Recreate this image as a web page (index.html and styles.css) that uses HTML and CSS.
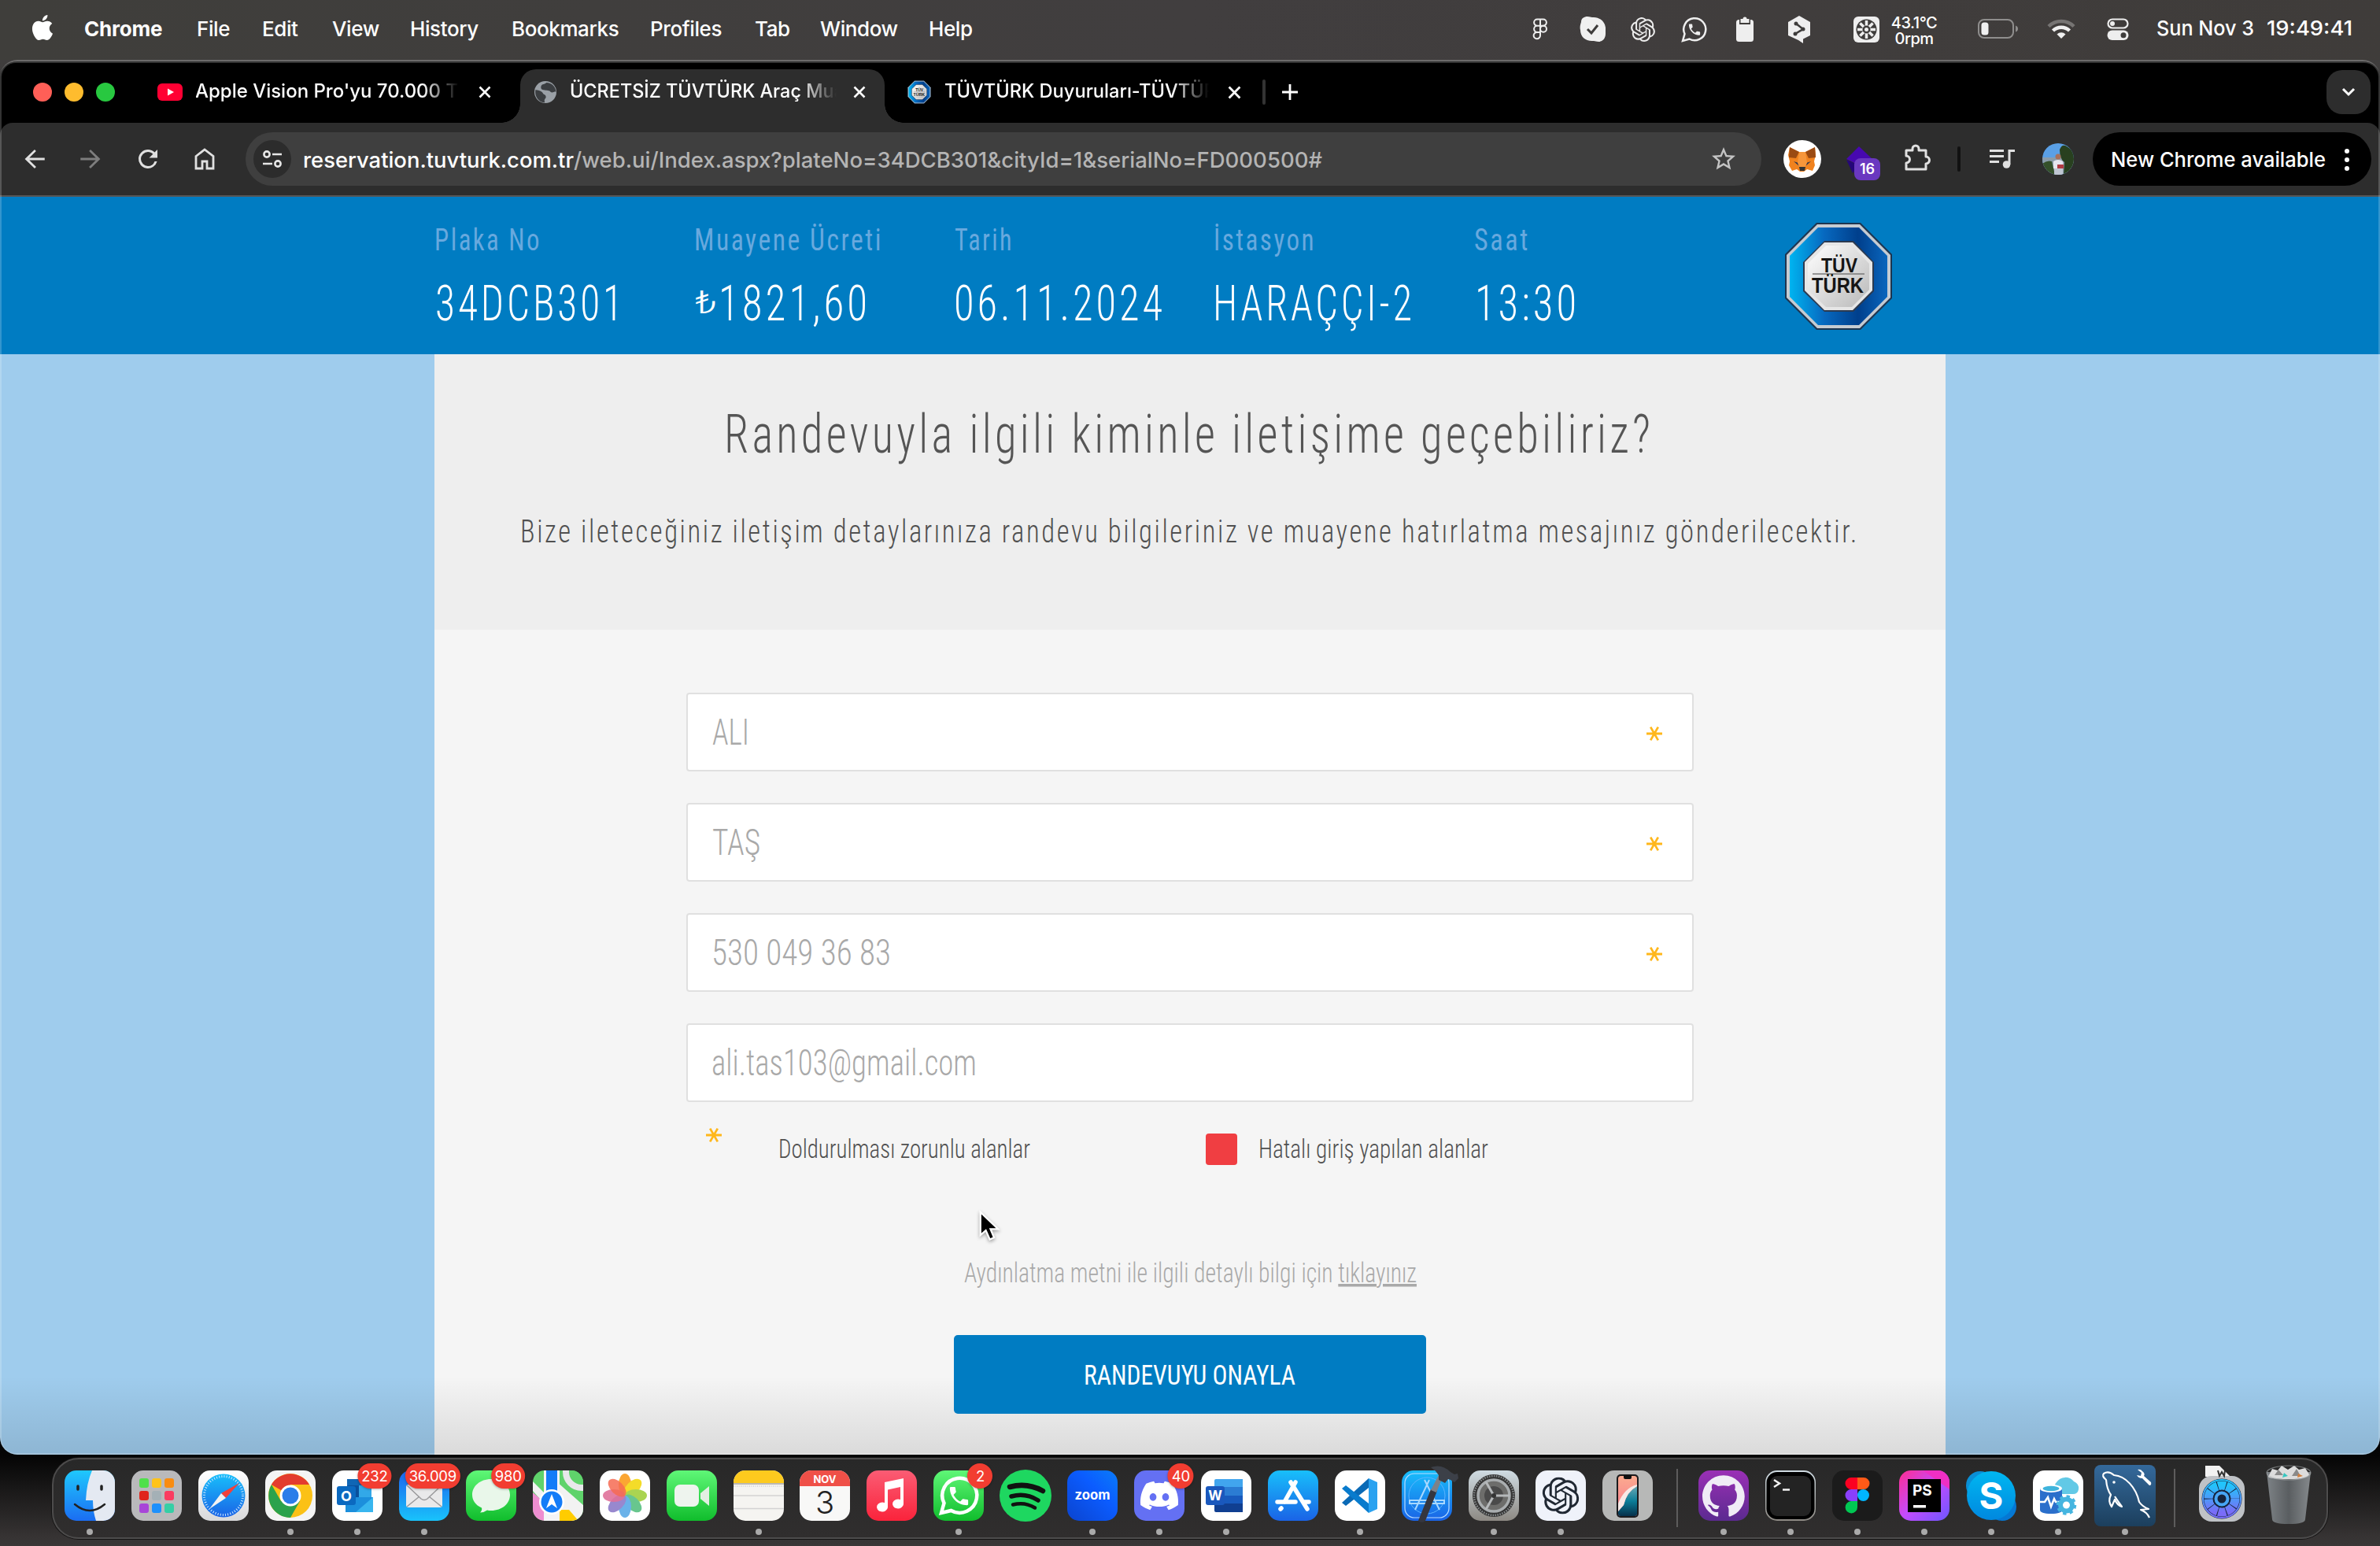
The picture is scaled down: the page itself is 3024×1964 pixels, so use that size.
FILE: index.html
```html
<!DOCTYPE html>
<html lang="tr">
<head>
<meta charset="utf-8">
<title>ÜCRETSİZ TÜVTÜRK Araç Muayene</title>
<link rel="stylesheet" href="styles.css">
</head>
<body>
<svg class="defs" width="0" height="0">
  <defs>
    <linearGradient id="gFinder" x2="0" y2="1"><stop stop-color="#1fc8fd"/><stop offset="1" stop-color="#1b6df2"/></linearGradient>
    <linearGradient id="gWhite" x2="0" y2="1"><stop stop-color="#fff"/><stop offset="1" stop-color="#d8d8da"/></linearGradient>
    <linearGradient id="gGreen" x2="0" y2="1"><stop stop-color="#5ff777"/><stop offset="1" stop-color="#10bd2c"/></linearGradient>
    <linearGradient id="gMail" x2="0" y2="1"><stop stop-color="#1a63ee"/><stop offset="1" stop-color="#19c3fb"/></linearGradient>
    <linearGradient id="gStore" x2="0" y2="1"><stop stop-color="#18bffb"/><stop offset="1" stop-color="#1a63e6"/></linearGradient>
    <linearGradient id="gMusic" x2="0" y2="1"><stop stop-color="#fb5c74"/><stop offset="1" stop-color="#fa233b"/></linearGradient>
    <linearGradient id="gGrey" x2="0" y2="1"><stop stop-color="#cfdbe2"/><stop offset="1" stop-color="#8d8983"/></linearGradient>
    <linearGradient id="gHub" x2="0" y2="1"><stop stop-color="#9a30b5"/><stop offset="1" stop-color="#5b2a90"/></linearGradient>
    <linearGradient id="gSky" x2="0" y2="1"><stop stop-color="#00b7f1"/><stop offset="1" stop-color="#0088df"/></linearGradient>
    <linearGradient id="gSql" x2="0" y2="1"><stop stop-color="#34699b"/><stop offset="1" stop-color="#1c3f5d"/></linearGradient>
    <linearGradient id="gBin" x2="1" y2="0"><stop stop-color="#7d8286"/><stop offset=".5" stop-color="#5a5e61"/><stop offset="1" stop-color="#85898c"/></linearGradient>
    <linearGradient id="gZoom" x1="1" y1="0" x2="0" y2="1"><stop stop-color="#0a7cf8"/><stop offset=".4" stop-color="#0b5cff"/><stop offset="1" stop-color="#0b44cf"/></linearGradient>
    <linearGradient id="gPs" x2="1" y2="1"><stop stop-color="#ff2d90"/><stop offset=".5" stop-color="#c44bff"/><stop offset="1" stop-color="#6b57ff"/></linearGradient>
    <linearGradient id="gFan" x2="0" y2="1"><stop stop-color="#22c4fb"/><stop offset="1" stop-color="#7a6cf8"/></linearGradient>
    <linearGradient id="gPhone" x2="0" y2="1"><stop stop-color="#fbab8f"/><stop offset="1" stop-color="#f7768e"/></linearGradient>
    <linearGradient id="gSea" x2="0" y2="1"><stop stop-color="#69a9b5"/><stop offset=".5" stop-color="#0b7d98"/><stop offset="1" stop-color="#05304a"/></linearGradient>
    <linearGradient id="gRing" x2="1" y2="0"><stop stop-color="#00b4f0"/><stop offset=".35" stop-color="#0769c0"/><stop offset=".7" stop-color="#003f8c"/><stop offset="1" stop-color="#0a66bd"/></linearGradient>
    <linearGradient id="gPlate" x2="1" y2="1"><stop stop-color="#fff"/><stop offset="1" stop-color="#b9b9b9"/></linearGradient>
    <clipPath id="tile"><rect width="64" height="64" rx="15"/></clipPath>
    <symbol id="knot" viewBox="0 0 24 24"><path d="M22.2819 9.8211a5.9847 5.9847 0 0 0-.5157-4.9108 6.0462 6.0462 0 0 0-6.5098-2.9A6.0651 6.0651 0 0 0 4.9807 4.1818a5.9847 5.9847 0 0 0-3.9977 2.9 6.0462 6.0462 0 0 0 .7427 7.0966 5.98 5.98 0 0 0 .511 4.9107 6.051 6.051 0 0 0 6.5146 2.9001A5.9847 5.9847 0 0 0 13.2599 24a6.0557 6.0557 0 0 0 5.7718-4.2058 5.9894 5.9894 0 0 0 3.9977-2.9001 6.0557 6.0557 0 0 0-.7475-7.0729zm-9.022 12.6081a4.4755 4.4755 0 0 1-2.8764-1.0408l.1419-.0804 4.7783-2.7582a.7948.7948 0 0 0 .3927-.6813v-6.7369l2.02 1.1686a.071.071 0 0 1 .038.052v5.5826a4.504 4.504 0 0 1-4.4945 4.4944zm-9.6607-4.1254a4.4708 4.4708 0 0 1-.5346-3.0137l.142.0852 4.783 2.7582a.7712.7712 0 0 0 .7806 0l5.8428-3.3685v2.3324a.0804.0804 0 0 1-.0332.0615L9.74 19.9502a4.4992 4.4992 0 0 1-6.1408-1.6464zM2.3408 7.8956a4.485 4.485 0 0 1 2.3655-1.9728V11.6a.7664.7664 0 0 0 .3879.6765l5.8144 3.3543-2.0201 1.1685a.0757.0757 0 0 1-.071 0l-4.8303-2.7865A4.504 4.504 0 0 1 2.3408 7.872zm16.5963 3.8558L13.1038 8.364 15.1192 7.2a.0757.0757 0 0 1 .071 0l4.8303 2.7913a4.4944 4.4944 0 0 1-.6765 8.1042v-5.6772a.79.79 0 0 0-.407-.667zm2.0107-3.0231l-.142-.0852-4.7735-2.7818a.7759.7759 0 0 0-.7854 0L9.409 9.2297V6.8974a.0662.0662 0 0 1 .0284-.0615l4.8303-2.7866a4.4992 4.4992 0 0 1 6.6802 4.66zM8.3065 12.863l-2.02-1.1638a.0804.0804 0 0 1-.038-.0567V6.0742a4.4992 4.4992 0 0 1 7.3757-3.4537l-.142.0805L8.704 5.459a.7948.7948 0 0 0-.3927.6813zm1.0976-2.3654l2.602-1.4998 2.6069 1.4998v2.9994l-2.5974 1.4997-2.6067-1.4997Z"/></symbol>
    <symbol id="phone" viewBox="0 0 24 24"><path d="M6.62 10.79c1.44 2.83 3.76 5.14 6.59 6.59l2.2-2.2c.27-.27.67-.36 1.02-.24 1.12.37 2.33.57 3.57.57.55 0 1 .45 1 1V20c0 .55-.45 1-1 1-9.39 0-17-7.61-17-17 0-.55.45-1 1-1h3.5c.55 0 1 .45 1 1 0 1.25.2 2.45.57 3.57.11.35.03.74-.25 1.02l-2.2 2.2z"/></symbol>
    <symbol id="star6" viewBox="0 0 20 18"><path d="M0 7.5 20 7.5 20 10.500 0 10.500zM4 1.200 6.400 0 16 16.800 13.600 18zM13.600 0 16 1.200 6.400 18 4 16.800z"/></symbol>
    <symbol id="x" viewBox="0 0 16 16"><path d="M1.500 1.500l13 13M14.500 1.500l-13 13" stroke="#fff" stroke-width="2.600" fill="none"/></symbol>
    <symbol id="tuv" viewBox="0 0 138 138">
      <path d="M41 1h56l40 40v56l-40 40H41L1 97V41z" fill="#1d3550"/>
      <path d="M42 3h54l39 39v54l-39 39H42L3 96V42z" fill="#c5cbd2"/>
      <path d="M43 7h52l36 36v52l-36 36H43L7 95V43z" fill="url(#gRing)"/>
      <path d="M51 24h37l26 27v37l-26 26H51L24 88V51z" fill="#2c3a50"/>
      <path d="M51 26h36l25 25v36l-25 25H51L26 87V51z" fill="#e6e6e6"/>
      <path d="M53 30h33l22 23v33l-22 22H53L30 86V53z" fill="url(#gPlate)"/>
      <text x="47" y="63.500" font-size="26" textLength="46" lengthAdjust="spacingAndGlyphs" class="mark">TÜV</text>
      <path d="M36 66h66" stroke="#777" stroke-width="1.500"/>
      <text x="35" y="90" font-size="27" textLength="66" lengthAdjust="spacingAndGlyphs" class="mark">TÜRK</text>
    </symbol>
  </defs>
</svg>

<div class="desktop">
  <header class="menubar">
    <nav class="menus">
      <svg class="apple" width="32" height="32" viewBox="0 0 24 24"><path fill="#fff" d="M12.152 6.896c-.948 0-2.415-1.078-3.96-1.04-2.04.027-3.91 1.183-4.961 3.014-2.117 3.675-.546 9.103 1.519 12.09 1.013 1.454 2.208 3.09 3.792 3.039 1.52-.065 2.09-.987 3.935-.987 1.831 0 2.35.987 3.96.948 1.637-.026 2.676-1.48 3.676-2.948 1.156-1.688 1.636-3.325 1.662-3.415-.039-.013-3.182-1.221-3.22-4.857-.026-3.04 2.48-4.494 2.597-4.559-1.429-2.09-3.623-2.324-4.39-2.376-2-.156-3.675 1.09-4.61 1.09zM15.53 3.83c.843-1.012 1.4-2.427 1.245-3.83-1.207.052-2.662.805-3.532 1.818-.78.896-1.454 2.338-1.273 3.714 1.338.104 2.715-.688 3.559-1.701"/></svg>
      <b>Chrome</b><span>File</span><span>Edit</span><span>View</span><span>History</span><span>Bookmarks</span><span>Profiles</span><span>Tab</span><span>Window</span><span>Help</span>
    </nav>
    <div class="status">
      <svg width="18" height="28" viewBox="0 0 18 28" fill="none" stroke="#eee" stroke-width="2"><path d="M9 1.500H5.200a4 4 0 0 0 0 8.200H9zM9 1.500h3.800a4 4 0 0 1 0 8.200H9zM9 9.700H5.200a4 4 0 0 0 0 8.200H9zM9 17.900H5.200A4.200 4.200 0 1 0 9 22z"/><circle cx="13" cy="13.800" r="4"/></svg>
      <svg width="34" height="34" viewBox="0 0 34 34"><path d="M3 8c0-5 4-7 8-7 3 0 4 1 6 1 9-1 16 5 17 13 0 3 0 5 0 8 0 6-4 10-9 10-3 0-4-1-6-1C9 33 2 27 2 18 1 15 2 11 3 8z" fill="#f0f0f0"/><path d="M11 17l5 5 8-10" stroke="#3e3c3b" stroke-width="3" fill="none"/></svg>
      <svg width="31" height="31" fill="#ececec"><use href="#knot"/></svg>
      <svg width="33" height="33" viewBox="0 0 33 33"><path d="M2 31l2.500-9A14 14 0 1 1 10.500 28.500z" fill="none" stroke="#eee" stroke-width="2.500"/><use href="#phone" x="7.500" y="7" width="19" height="19" fill="#eee"/></svg>
      <svg width="24" height="34" viewBox="0 0 24 34"><rect x="1" y="5" width="22" height="28" rx="3.500" fill="#eee"/><path d="M5 5h14v6H5z" fill="#3e3c3b"/><path d="M6.500 4h3a2.500 2.500 0 0 1 5 0h3v5h-11z" fill="#eee"/></svg>
      <svg width="30" height="36" viewBox="0 0 30 36"><path d="M15 1l14 8v17l-9 4.500V36l-6-4L1 26V9z" fill="#eee"/><path d="M11 11l9 7-10 6" fill="none" stroke="#3e3c3b" stroke-width="2.500"/><circle cx="11" cy="11" r="2.500" fill="#3e3c3b"/><circle cx="20" cy="18" r="2.500" fill="#3e3c3b"/><circle cx="10" cy="24" r="2.500" fill="#3e3c3b"/></svg>
      <svg width="33" height="33" viewBox="0 0 33 33"><rect width="33" height="33" rx="6" fill="#eee"/><circle cx="16.500" cy="16.500" r="13" fill="#3e3c3b"/><g stroke="#eee" stroke-width="3.500"><path d="M16.500 5v23M5 16.500h23M8.400 8.400l16.200 16.200M24.600 8.400L8.400 24.600"/></g><circle cx="16.500" cy="16.500" r="5" fill="#3e3c3b"/><circle cx="16.500" cy="16.500" r="2.500" fill="#eee"/></svg>
      <div class="temp"><span>43.1°C</span><span>0rpm</span></div>
      <svg width="51" height="26" viewBox="0 0 51 26"><rect x="1" y="1" width="44" height="23" rx="7" fill="none" stroke="#8f8e8d" stroke-width="2"/><rect x="4.500" y="4.500" width="9" height="16" rx="3.500" fill="#f0f0f0"/><path d="M48 8.500q3 1 3 4t-3 4z" fill="#8f8e8d"/></svg>
      <svg width="36" height="26" viewBox="0 0 36 26" fill="none" stroke-width="4.500"><path d="M2 9.500a23 23 0 0 1 32 0" stroke="#767473"/><path d="M7.500 15a15 15 0 0 1 21 0" stroke="#f0f0f0"/><path d="M18 25l-5.500-5.500a8 8 0 0 1 11 0z" fill="#f0f0f0"/></svg>
      <svg width="28" height="28" viewBox="0 0 28 28"><rect x="1.500" y="1.500" width="25" height="11" rx="5.500" fill="none" stroke="#eee" stroke-width="2.200"/><circle cx="7" cy="7" r="3" fill="#eee"/><rect x=".5" y="15.500" width="27" height="12.500" rx="6.200" fill="#eee"/><circle cx="21" cy="21.700" r="3.500" fill="#3e3c3b"/></svg>
      <svg width="250" height="40"><text x="0" y="28" textLength="124" class="ui s26" lengthAdjust="spacingAndGlyphs">Sun Nov 3</text><text x="140" y="28" textLength="109" class="ui s26" lengthAdjust="spacingAndGlyphs">19:49:41</text></svg>
    </div>
  </header>

  <main class="window">
    <div class="tabstrip">
      <div class="lights"><i class="red"></i><i class="amber"></i><i class="green"></i></div>
      <svg width="32" height="22"><rect width="32" height="22" rx="6" fill="#ff0033"/><path d="M13 6.500v9l8-4.500z" fill="#fff"/></svg>
      <svg class="title" width="334" height="40"><text x="-1" y="27" class="ui s24" textLength="353" lengthAdjust="spacingAndGlyphs">Apple Vision Pro'yu 70.000 TL'</text></svg>
      <svg width="16" height="16"><use href="#x"/></svg>
      <div class="tab">
        <svg width="32" height="32" viewBox="0 0 24 24"><circle cx="12" cy="12" r="10.500" fill="#9aa0a6"/><path d="M13 3c-2 2-4 1-5 3-1 3 1 4 3 4 2 1 5 0 6 2 2 1 4-1 5 0 0-5-4-9-9-9zM2.500 10c2 0 6 1 7 3s3 1 3 4c-1 2-2 2-1 5-6 0-10-6-9-12z" fill="#3b3e41"/></svg>
        <svg class="title" width="338" height="40"><text x="-1" y="27" class="ui s24" textLength="349" lengthAdjust="spacingAndGlyphs">ÜCRETSİZ TÜVTÜRK Araç Mua</text></svg>
        <svg width="16" height="16"><use href="#x"/></svg>
      </div>
      <svg width="30" height="30"><use href="#tuv"/></svg>
      <svg class="title" width="335" height="40"><text x="-1" y="27" class="ui s24" textLength="345" lengthAdjust="spacingAndGlyphs">TÜVTÜRK Duyuruları-TÜVTÜR</text></svg>
      <svg width="17" height="17"><use href="#x"/></svg>
      <i class="bar"></i>
      <svg class="plus" width="22" height="22"><path d="M11 1v20M1 11h20" stroke="#fff" stroke-width="2.800"/></svg>
      <div class="more"><svg width="18" height="12"><path d="M2 2l7 7 7-7" fill="none" stroke="#fff" stroke-width="3"/></svg></div>
    </div>

    <div class="toolbar">
      <svg width="36" height="36" viewBox="0 0 24 24" fill="#e0e0e0"><path d="M20.500 11H7.500l5.700-5.700L12 4l-8.300 8L12 20l1.300-1.300L7.500 13h13z"/></svg>
      <svg width="36" height="36" viewBox="0 0 24 24" fill="#7d7d7d"><path d="M3.500 11h13l-5.700-5.700L12 4l8.300 8L12 20l-1.300-1.300 5.800-5.700h-13z"/></svg>
      <svg width="36" height="36" viewBox="0 0 24 24" fill="#e0e0e0"><path d="M17.650 6.350A7.958 7.958 0 0 0 12 4a8 8 0 1 0 7.730 10h-2.080A5.990 5.990 0 0 1 12 18a6 6 0 1 1 0-12c1.660 0 3.140.690 4.220 1.780L13 11h7V4z"/></svg>
      <svg width="26" height="28" viewBox="0 0 26 28"><path d="M2 10.500L13 2l11 8.500V26h-8v-9h-6v9H2z" fill="none" stroke="#e0e0e0" stroke-width="2.800"/></svg>
      <div class="omnibox">
        <div class="site"><svg width="26" height="26" viewBox="0 0 26 26" fill="none" stroke="#e6e6e6" stroke-width="2.600"><circle cx="6" cy="7" r="3.600"/><path d="M13 7h12M1 19h12"/><circle cx="20" cy="19" r="3.600"/></svg></div>
        <svg width="1300" height="50"><text x="-2" y="35.500" class="ui s27" textLength="344" lengthAdjust="spacingAndGlyphs">reservation.tuvturk.com.tr</text><text x="342" y="35.500" class="ui s27 dim" textLength="951" lengthAdjust="spacingAndGlyphs">/web.ui/Index.aspx?plateNo=34DCB301&amp;cityId=1&amp;serialNo=FD000500#</text></svg>
        <svg class="fav" width="36" height="36" viewBox="0 0 24 24" fill="#c4c4c4"><path d="M22 9.240l-7.190-.620L12 2 9.190 8.630 2 9.240l5.460 4.730L5.820 21 12 17.270 18.180 21l-1.630-7.030L22 9.240zM12 15.400l-3.760 2.270 1-4.280-3.320-2.880 4.380-.380L12 6.100l1.710 4.040 4.380.380-3.320 2.880 1 4.280L12 15.400z"/></svg>
      </div>
      <svg width="48" height="48" viewBox="0 0 48 48"><circle cx="24" cy="24" r="24" fill="#fff"/><path d="M8 9l12 6h8l12-6 1 10-2 8 1 5-3 7-7-2-4 3h-5l-4-3-6 2-4-7 1-5-2-8z" fill="#f0821e"/><path d="M8 9l12 6-4 8-9-1zM40 9l-12 6 4 8 9-1z" fill="#9a4a12"/><path d="M13 27l6 2 1 4zM35 27l-6 2-1 4z" fill="#2a3550"/><path d="M20 15h8l2 14-2 5h-8l-2-5z" fill="#f6963b"/><path d="M20 34h8l-1 5h-6z" fill="#333"/></svg>
      <div class="ext"><svg width="36" height="36" viewBox="0 0 36 36"><path d="M2 17l8 17 8-10z" fill="#25067a"/><path d="M18 0l17 16-17 8L2 16z" fill="#4708b0"/></svg><span>16</span></div>
      <svg class="puzzle" width="34" height="34" viewBox="0 0 34 34"><path d="M3 8h8V6a4 4 0 0 1 8 0v2h9v8a4.500 4.500 0 0 1 0 9v7H3v-8a4.500 4.500 0 0 0 0-9z" fill="none" stroke="#e0e0e0" stroke-width="3" stroke-linejoin="round"/></svg>
      <i class="rule"></i>
      <svg width="32" height="26" viewBox="0 0 32 26"><path d="M0 2.500h18M0 9.500h18M0 16.500h12" stroke="#e0e0e0" stroke-width="3"/><path d="M25 20V2.500h7" stroke="#e0e0e0" stroke-width="3" fill="none"/><circle cx="21.500" cy="20" r="4.800" fill="#e0e0e0"/></svg>
      <svg class="avatar" width="40" height="40" viewBox="0 0 40 40"><path d="M0 0h40v40H0z" fill="#5aa0e6"/><path d="M0 18h40v22H0z" fill="#8a9caa"/><path d="M0 26q6-5 12-3l4 17H0z" fill="#34502a"/><path d="M22 8q3-8 9-4t9 6v30H27l1-16q-6-4-6-16z" fill="#28401f"/><circle cx="20" cy="17" r="3.500" fill="#a8705a"/><path d="M14 23q6-4 12 0l1 9H14z" fill="#e5e5ef"/><path d="M19 27h8v5h-8z" fill="#b03b43"/><path d="M15 32h11v8H15z" fill="#bfc6d2"/></svg>
      <div class="update"><svg width="280" height="50"><text x="-1" y="35" class="ui s26" textLength="273" lengthAdjust="spacingAndGlyphs">New Chrome available</text></svg><svg width="8" height="28" fill="#fff"><circle cx="3" cy="4" r="3"/><circle cx="3" cy="15" r="3"/><circle cx="3" cy="26" r="3"/></svg></div>
    </div>

    <div class="page">
      <div class="summary">
        <svg width="330" height="200"><text x="0" y="67.500" class="cond label" textLength="136" lengthAdjust="spacingAndGlyphs">Plaka No</text><text x="1" y="157" class="cond value" textLength="242" lengthAdjust="spacingAndGlyphs">34DCB301</text></svg>
        <svg width="330" height="200"><text x="0" y="67.500" class="cond label" textLength="240" lengthAdjust="spacingAndGlyphs">Muayene Ücreti</text><text x="1" y="148" class="lira" textLength="28" lengthAdjust="spacingAndGlyphs">₺</text><text x="31" y="157" class="cond value" textLength="193" lengthAdjust="spacingAndGlyphs">1821,60</text></svg>
        <svg width="330" height="200"><text x="1" y="67.500" class="cond label" textLength="75" lengthAdjust="spacingAndGlyphs">Tarih</text><text x="0" y="157" class="cond value" textLength="269" lengthAdjust="spacingAndGlyphs">06.11.2024</text></svg>
        <svg width="330" height="200"><text x="0" y="67.500" class="cond label" textLength="130" lengthAdjust="spacingAndGlyphs">İstasyon</text><text x="-1" y="157" class="cond value" textLength="257" lengthAdjust="spacingAndGlyphs">HARAÇÇI-2</text></svg>
        <svg width="330" height="200"><text x="1" y="67.500" class="cond label" textLength="71" lengthAdjust="spacingAndGlyphs">Saat</text><text x="2" y="157" class="cond value" textLength="133" lengthAdjust="spacingAndGlyphs">13:30</text></svg>
        <svg class="logo" width="138" height="138"><use href="#tuv"/></svg>
      </div>

      <div class="sheet">
        <section class="intro">
          <svg width="1920" height="90"><text x="368" y="64.500" class="cond heading" textLength="1181" lengthAdjust="spacingAndGlyphs">Randevuyla ilgili kiminle iletişime geçebiliriz?</text></svg>
          <svg width="1920" height="70"><text x="109" y="48.500" class="cond lead" textLength="1701" lengthAdjust="spacingAndGlyphs">Bize ileteceğiniz iletişim detaylarınıza randevu bilgileriniz ve muayene hatırlatma mesajınız gönderilecektir.</text></svg>
        </section>
        <section class="form">
          <div class="field"><svg width="400" height="96"><text x="0" y="64" class="input" textLength="47" lengthAdjust="spacingAndGlyphs">ALI</text></svg><svg class="must" width="20" height="18" fill="#ffb71b"><use href="#star6"/></svg></div>
          <div class="field"><svg width="400" height="96"><text x="0" y="64" class="input" textLength="61" lengthAdjust="spacingAndGlyphs">TAŞ</text></svg><svg class="must" width="20" height="18" fill="#ffb71b"><use href="#star6"/></svg></div>
          <div class="field"><svg width="400" height="96"><text x="-1" y="64" class="input" textLength="228" lengthAdjust="spacingAndGlyphs">530 049 36 83</text></svg><svg class="must" width="20" height="18" fill="#ffb71b"><use href="#star6"/></svg></div>
          <div class="field"><svg width="400" height="96"><text x="-1" y="64" class="input" textLength="337" lengthAdjust="spacingAndGlyphs">ali.tas103@gmail.com</text></svg></div>
          <div class="legend">
            <svg class="req" width="20" height="18" fill="#ffb71b"><use href="#star6"/></svg>
            <svg width="330" height="60"><text x="-1" y="51" class="note" textLength="320" lengthAdjust="spacingAndGlyphs">Doldurulması zorunlu alanlar</text></svg>
            <i class="error"></i>
            <svg width="330" height="60"><text x="-2" y="51" class="note" textLength="292" lengthAdjust="spacingAndGlyphs">Hatalı giriş yapılan alanlar</text></svg>
          </div>
          <svg class="consent" width="600" height="60"><text x="13" y="39" class="fine" textLength="575" lengthAdjust="spacingAndGlyphs">Aydınlatma metni ile ilgili detaylı bilgi için <tspan class="link">tıklayınız</tspan></text></svg>
          <div class="confirm"><svg width="600" height="100"><text x="165" y="63" class="cta" textLength="269" lengthAdjust="spacingAndGlyphs">RANDEVUYU ONAYLA</text></svg></div>
        </section>
      </div>
      <svg class="cursor" width="31" height="42" viewBox="0 0 34 46"><path d="M3 2v32l7.500-6.500L16 40l6-2.500L17 25.500h10.500z" fill="#000" stroke="#fff" stroke-width="2.500"/></svg>
    </div>
  </main>

  <footer class="dock">
    <div class="app run"><svg viewBox="0 0 64 64"><g clip-path="url(#tile)"><path d="M0 0h64v64H0z" fill="url(#gFinder)"/><path d="M35 0h29v64H40q-4-12-4-26h-9Q28 16 35 0z" fill="#e4e9f2"/></g><path d="M17 20v4M47 20v4" stroke="#222" stroke-width="3.500" stroke-linecap="round"/><path d="M13 43q19 16 38 0" fill="none" stroke="#222" stroke-width="2.500" stroke-linecap="round"/></svg></div>
    <div class="app"><svg viewBox="0 0 64 64"><rect width="64" height="64" rx="15" fill="#b9b9bb"/><rect x="10" y="10" width="12" height="12" rx="3" fill="#4fe04a"/><rect x="26" y="10" width="12" height="12" rx="3" fill="#ffc31a"/><rect x="42" y="10" width="12" height="12" rx="3" fill="#f98c10"/><rect x="10" y="26" width="12" height="12" rx="3" fill="#e0251b"/><rect x="26" y="26" width="12" height="12" rx="3" fill="#a4b0b6"/><rect x="42" y="26" width="12" height="12" rx="3" fill="#fa3c60"/><rect x="10" y="42" width="12" height="12" rx="3" fill="#a845d8"/><rect x="26" y="42" width="12" height="12" rx="3" fill="#1e90fb"/><rect x="42" y="42" width="12" height="12" rx="3" fill="#35cfa5"/></svg></div>
    <div class="app"><svg viewBox="0 0 64 64"><rect width="64" height="64" rx="15" fill="url(#gWhite)"/><circle cx="32" cy="32" r="27.500" fill="url(#gStore)"/><circle cx="32" cy="32" r="24.500" fill="none" stroke="#cfe8ff" stroke-width="3" stroke-dasharray="1 2.200"/><path d="M52 16L35 35l-6-6z" fill="#f3403a"/><path d="M14 49l15-20 6 6z" fill="#f2f2f2"/></svg></div>
    <div class="app run"><svg viewBox="0 0 64 64"><rect width="64" height="64" rx="15" fill="#f4f4f4"/><circle cx="32" cy="32" r="28" fill="#fbc116"/><path d="M32 32L7.800 18A28 28 0 0 1 56 18H32z" fill="#e33b2e"/><path d="M32 60l12-21-24 0-12-21A28 28 0 0 0 32 60z" fill="#2ba24c"/><circle cx="32" cy="32" r="13.500" fill="#fff"/><circle cx="32" cy="32" r="10.500" fill="#2b7de9"/></svg></div>
    <div class="app run"><svg viewBox="0 0 64 64"><rect width="64" height="64" rx="15" fill="#fff"/><path d="M19 11h31v24H19z" fill="#1066b5"/><path d="M19 19h16v16H19z" fill="#0a4f9c"/><path d="M34 19h16v16H34z" fill="#32a8e8"/><path d="M17 34h35v19H17z" fill="#1c8fdc"/><path d="M52 34L30 53h22z" fill="#38b6ef"/><rect x="6" y="20" width="24" height="24" rx="3" fill="#0b69c0"/><text x="18" y="38.500" class="ic" font-size="18">O</text></svg><span class="badge">232</span></div>
    <div class="app run"><svg viewBox="0 0 64 64"><rect width="64" height="64" rx="15" fill="url(#gMail)"/><rect x="9" y="18" width="46" height="29" rx="3" fill="#e9e9ea"/><path d="M10 19l18 17q4 3 8 0l18-17M10 46l16-13M54 46L38 33" fill="none" stroke="#9a9a9c" stroke-width="1.500"/></svg><span class="badge wide">36.009</span></div>
    <div class="app"><svg viewBox="0 0 64 64"><rect width="64" height="64" rx="15" fill="url(#gGreen)"/><path d="M32 11c14 0 24 9 24 20S46 51 32 51q-3 0-5-.5-4 3-9 3 3-3 2-6C12 44 8 38 8 31c0-11 10-20 24-20z" fill="#e9f7ea"/></svg><span class="badge">980</span></div>
    <div class="app"><svg viewBox="0 0 64 64"><g clip-path="url(#tile)"><path d="M0 0h64v64H0z" fill="#5fd36b"/><path d="M30 14l34 30v20H30z" fill="#f2f2f2"/><path d="M34 10l30 26V0H34z" fill="#5fd36b"/><path d="M0 14l14 14v14L0 26z" fill="#f2f2f2"/><path d="M0 28v36h14V40z" fill="#ee8ed0"/><path d="M34 50h12l12 14H34z" fill="#fc0"/><circle cx="62" cy="2" r="20" fill="none" stroke="#e8e8ea" stroke-width="8"/><path d="M14 0h20v64H14z" fill="#f4f4f6"/><path d="M17 0h14v30H17z" fill="#137cf8"/></g><circle cx="24" cy="40" r="16" fill="#fff"/><circle cx="24" cy="40" r="13.500" fill="#137cf8"/><path d="M24 30l7 18-7-5-7 5z" fill="#fff"/></svg></div>
    <div class="app"><svg viewBox="0 0 64 64"><rect width="64" height="64" rx="15" fill="#fff"/><g opacity=".88"><ellipse cx="32" cy="18" rx="8" ry="14" fill="#fb9a17"/><ellipse cx="32" cy="18" rx="8" ry="14" fill="#f3d80c" transform="rotate(45 32 32)"/><ellipse cx="32" cy="18" rx="8" ry="14" fill="#9fcf3a" transform="rotate(90 32 32)"/><ellipse cx="32" cy="18" rx="8" ry="14" fill="#54bf7f" transform="rotate(135 32 32)"/><ellipse cx="32" cy="18" rx="8" ry="14" fill="#56a8e6" transform="rotate(180 32 32)"/><ellipse cx="32" cy="18" rx="8" ry="14" fill="#8a78c8" transform="rotate(225 32 32)"/><ellipse cx="32" cy="18" rx="8" ry="14" fill="#dc5d8c" opacity=".9" transform="rotate(270 32 32)"/><ellipse cx="32" cy="18" rx="8" ry="14" fill="#f4573b" opacity=".85" transform="rotate(315 32 32)"/></g></svg></div>
    <div class="app"><svg viewBox="0 0 64 64"><rect width="64" height="64" rx="15" fill="url(#gGreen)"/><rect x="10" y="18" width="31" height="28" rx="7" fill="#eef4ee"/><path d="M43 29l11-9v25l-11-9z" fill="#e2efe2"/></svg></div>
    <div class="app run"><svg viewBox="0 0 64 64"><g clip-path="url(#tile)"><path d="M0 0h64v64H0z" fill="#f5f4f1"/><path d="M0 0h64v16H0z" fill="#fdca1e"/><path d="M0 17h64" stroke="#a7a49d" stroke-width="1.500"/><path d="M0 20h64" stroke="#bbb" stroke-dasharray="1 1.500"/><path d="M0 32h64M0 48.500h64" stroke="#d3d2d2" stroke-width="1.500"/></g></svg></div>
    <div class="app"><svg viewBox="0 0 64 64"><g clip-path="url(#tile)"><path d="M0 0h64v64H0z" fill="#f8f8f7"/><path d="M0 0h64v20H0z" fill="#ef5048"/></g><text x="32" y="15.500" class="ic" font-size="13">NOV</text><text x="32" y="55" class="ic day" font-size="40">3</text></svg></div>
    <div class="app"><svg viewBox="0 0 64 64"><rect width="64" height="64" rx="15" fill="url(#gMusic)"/><path d="M23 15l24-5v33a7 6 0 1 1-4-6V21l-16 3.500V47a7 6 0 1 1-4-6z" fill="#fff"/></svg></div>
    <div class="app run"><svg viewBox="0 0 64 64"><rect width="64" height="64" rx="15" fill="url(#gGreen)"/><path d="M10 54l3.500-12.500A22 22 0 1 1 22.500 51z" fill="none" stroke="#fff" stroke-width="4.500"/><use href="#phone" x="17" y="17" width="31" height="31" fill="#fff"/></svg><span class="badge short">2</span></div>
    <div class="app"><svg viewBox="0 0 64 64"><circle cx="32" cy="32" r="33" fill="#1ed760"/><g fill="none" stroke="#111" stroke-linecap="round"><path d="M12 21q22-6 42 5" stroke-width="6.500"/><path d="M14 33q18-5 34 5" stroke-width="5.500"/><path d="M16 43.500q15-4 28 4" stroke-width="4.500"/></g></svg></div>
    <div class="app run"><svg viewBox="0 0 64 64"><rect width="64" height="64" rx="15" fill="url(#gZoom)"/><text x="32" y="37" class="ic" font-size="17" textLength="45" lengthAdjust="spacingAndGlyphs">zoom</text></svg></div>
    <div class="app run"><svg viewBox="0 0 64 64"><rect width="64" height="64" rx="15" fill="#6470f3"/><g transform="translate(8 8)scale(2)"><path fill="#fff" d="M20.317 4.370a19.800 19.800 0 0 0-4.885-1.515l-.687 1.286a18.300 18.300 0 0 0-5.487 0l-.7-1.286a19.700 19.700 0 0 0-4.880 1.515C.533 9.046-.319 13.580.1 18.058c2.070 1.530 4.060 2.460 6.060 3.090.5-.680.930-1.390 1.280-2.100-.7-.260-1.330-.570-1.960-.940l.5-.400c3.930 1.793 8.180 1.793 12.060 0l.5.400c-.600.360-1.260.680-1.960.940.370.710.790 1.400 1.270 2.100 2-.620 4-1.540 6.070-3.090.500-5.177-.838-9.674-3.600-13.688zM8.020 15.331c-1.182 0-2.157-1.086-2.157-2.419s.955-2.419 2.157-2.419 2.176 1.095 2.157 2.419c0 1.333-.956 2.419-2.157 2.419zm7.975 0c-1.183 0-2.157-1.086-2.157-2.419s.955-2.419 2.157-2.419 2.176 1.095 2.157 2.419c0 1.333-.946 2.419-2.157 2.419z"/></g></svg><span class="badge short">40</span></div>
    <div class="app run"><svg viewBox="0 0 64 64"><rect width="64" height="64" rx="15" fill="#fff"/><path d="M17 13a2 2 0 0 1 2-2h34v11H17z" fill="#41a5ee"/><path d="M17 21h36v11H17z" fill="#2b7cd3"/><path d="M17 32h36v10H17z" fill="#185abd"/><path d="M17 42h36v11H19a2 2 0 0 1-2-2z" fill="#103f91"/><rect x="6" y="20" width="24" height="24" rx="3" fill="#1a58bd"/><text x="18" y="38" class="ic" font-size="17">W</text></svg></div>
    <div class="app"><svg viewBox="0 0 64 64"><rect width="64" height="64" rx="15" fill="url(#gStore)"/><g stroke="#fff" stroke-width="5.500" stroke-linecap="round"><path d="M35 15L21 40M29 15l21 34M12 40h23M45 40h7M17 48l-1 1"/></g></svg></div>
    <div class="app run"><svg viewBox="0 0 64 64"><rect width="64" height="64" rx="15" fill="#fff"/><path d="M43 10v12L14 45l-5-4z" fill="#0a6ab6"/><path d="M9 23l5-4 29 23v12z" fill="#087bcd"/><path d="M43 10l11 5v34l-11 5z" fill="#2aa2f0"/></svg></div>
    <div class="app"><svg viewBox="0 0 64 64"><rect width="64" height="64" rx="15" fill="url(#gStore)"/><rect x="4" y="4" width="56" height="56" rx="12" fill="none" stroke="#b7dcff" stroke-width="1.200"/><circle cx="32" cy="32" r="23" fill="none" stroke="#5db5ff"/><path d="M35 12L17 50M29 12l19 38M10 38h44v4H10z" fill="none" stroke="#a8d8ff" stroke-width="2"/><path d="M45 26L30 64q-5 4-9 0L37 24z" fill="#35363f"/><path d="M53 6L44 28l-7-3L48 4z" fill="#7d8289"/><path d="M37-4q14-5 25 6l5 3 4-1 1 6-5 5-5-3-3-1-4 5-8-4v-6q-4-6-10-10z" fill="#3c4048"/></svg></div>
    <div class="app run"><svg viewBox="0 0 64 64"><rect width="64" height="64" rx="15" fill="url(#gGrey)"/><circle cx="32" cy="32" r="27" fill="#343434"/><circle cx="32" cy="32" r="25" fill="none" stroke="#85898b" stroke-width="2.500" stroke-dasharray="1.500 1.500"/><circle cx="32" cy="32" r="20" fill="#6d6d6b" stroke="#a9adaf" stroke-width="3.500"/><circle cx="32" cy="32" r="12" fill="#4a4a4a"/><path d="M32 32h20M32 32L22 14.500M32 32L22 49.500" stroke="#b5b8ba" stroke-width="3"/><circle cx="32" cy="32" r="3" fill="#333"/></svg></div>
    <div class="app run"><svg viewBox="0 0 64 64"><rect width="64" height="64" rx="15" fill="#eff2fa"/><use href="#knot" x="8.500" y="8.500" width="47" height="47" fill="#202833"/></svg></div>
    <div class="app"><svg viewBox="0 0 64 64"><rect width="64" height="64" rx="15" fill="#b7b8b7"/><rect x="18" y="5" width="28" height="55" rx="5" fill="#1c1c1e"/><rect x="20" y="7" width="24" height="51" rx="3.500" fill="url(#gPhone)"/><path d="M44 20Q31 27 27 44l-7 8v3q0 3 3 3h18q3 0 3-3z" fill="url(#gSea)"/><path d="M44 20Q31 27 27 44l-7 8 0-10q8-20 24-24z" fill="#f7e9e6"/><path d="M27 6h10v3q0 2-2 2h-6q-2 0-2-2z" fill="#111"/></svg></div>
    <i class="split one"></i>
    <div class="app run"><svg viewBox="0 0 64 64"><rect width="64" height="64" rx="15" fill="url(#gHub)"/><g transform="translate(5 5.500)scale(2.240)"><path fill="#f0ecf6" d="M12 .297c-6.630 0-12 5.373-12 12 0 5.303 3.438 9.800 8.205 11.385.600.113.820-.258.820-.577 0-.285-.010-1.040-.015-2.040-3.338.724-4.042-1.610-4.042-1.610C4.422 18.070 3.633 17.700 3.633 17.700c-1.087-.744.084-.729.084-.729 1.205.084 1.838 1.236 1.838 1.236 1.070 1.835 2.809 1.305 3.495.998.108-.776.417-1.305.760-1.605-2.665-.300-5.466-1.332-5.466-5.930 0-1.310.465-2.380 1.235-3.220-.135-.303-.540-1.523.105-3.176 0 0 1.005-.322 3.300 1.230.960-.267 1.980-.399 3-.405 1.020.006 2.040.138 3 .405 2.280-1.552 3.285-1.230 3.285-1.230.645 1.653.240 2.873.120 3.176.765.840 1.230 1.910 1.230 3.220 0 4.610-2.805 5.625-5.475 5.920.420.360.810 1.096.810 2.220 0 1.606-.015 2.896-.015 3.286 0 .315.210.690.825.570C20.565 22.092 24 17.592 24 12.297c0-6.627-5.373-12-12-12"/></g></svg></div>
    <div class="app run"><svg viewBox="0 0 64 64"><rect width="64" height="64" rx="15" fill="url(#gGrey)"/><rect x="1.500" y="2" width="61" height="60" rx="13.500" fill="#000"/><rect x="6" y="7" width="52" height="51" rx="9" fill="#232323"/><path d="M11 12l7 4.500-7 4.500M22 24.500h9" stroke="#f4f4f4" stroke-width="2.500" fill="none"/></svg></div>
    <div class="app run"><svg viewBox="0 0 64 64"><rect width="64" height="64" rx="15" fill="#1b1b1b"/><path d="M32 9h-8a7.500 7.500 0 0 0 0 15h8z" fill="#fb0021"/><path d="M32 9h8a7.500 7.500 0 0 1 0 15h-8z" fill="#ff5a17"/><path d="M32 24h-8a7.500 7.500 0 0 0 0 15h8z" fill="#8a3ffb"/><circle cx="39.500" cy="31.500" r="7.500" fill="#00b6ff"/><path d="M32 39h-8a7.700 7.700 0 1 0 8 7.700z" fill="#00c853"/></svg></div>
    <div class="app run"><svg viewBox="0 0 64 64"><g clip-path="url(#tile)"><path d="M0 0h64v64H0z" fill="url(#gPs)"/><path d="M30 0h34v24z" fill="#ef2fc4"/></g><path d="M11 11h42v42H11z"/><text x="17" y="32" class="ic left" font-size="19">PS</text><path d="M18 44h16v3.500H18z" fill="#fff"/></svg></div>
    <div class="app run"><svg viewBox="0 0 64 64"><circle cx="18" cy="19" r="18" fill="#0a8fd6"/><circle cx="46" cy="46" r="18" fill="#0578d4"/><circle cx="32" cy="32" r="31" fill="url(#gSky)"/><text x="32" y="49" class="ic" font-size="47">S</text></svg></div>
    <div class="app run"><svg viewBox="0 0 64 64"><rect width="64" height="64" rx="15" fill="#fff"/><path d="M34 30a9 9 0 0 1-4-15 13 12 0 0 1 22-1q7 3 6 10-1 6-7 6z" fill="#62c9e6"/><path d="M9 22h28v28q0 5-14 5T9 50z" fill="#2b6fcb"/><ellipse cx="23" cy="23" rx="14" ry="5" fill="#fff"/><ellipse cx="23" cy="23" rx="10.500" ry="3.200" fill="#3fb4dc"/><path d="M9 40h6l4-6 4 12 4-10 2 4h5" fill="none" stroke="#fff" stroke-width="2.500"/><circle cx="42.500" cy="44" r="7.500" fill="none" stroke="#45b5e0" stroke-width="6"/><circle cx="42.500" cy="44" r="11" fill="none" stroke="#45b5e0" stroke-width="3.500" stroke-dasharray="4.300 4.300"/></svg></div>
    <div class="app run"><svg viewBox="0 0 64 64"><rect x="-7" y="-7" width="78" height="78" rx="8" fill="url(#gSql)"/><path d="M63 60q-3-7-11-10l10-1q-8-3-12-9C46 22 33 7 18 6Q11 0 5 4q-3 3 3 8 1 12 6 19-4 8 1 15l4-9q3 7 9 9-5-7-9-13" fill="none" stroke="#fff" stroke-width="2.200" stroke-linejoin="round"/><circle cx="18" cy="15" r="1.800" fill="#fff"/><path d="M48-1q4-1 6 2 4 3 2 6l9 8q1 4-2 4l-9-9q-5 0-7-4l5 1 1-4z" fill="#fff"/></svg></div>
    <i class="split two"></i>
    <div class="app"><svg viewBox="0 0 64 64"><path d="M11 8V-6h18l14 14z" fill="#f2f2f2"/><rect x="3" y="7" width="58" height="58" rx="16" fill="#bfc2c6"/><circle cx="32" cy="36" r="25.500" fill="#16233c"/><circle cx="32" cy="36" r="17" fill="none" stroke="url(#gFan)" stroke-width="11" stroke-dasharray="9.800 .88"/><circle cx="32" cy="36" r="24" fill="none" stroke="url(#gFan)" stroke-width="2"/><circle cx="32" cy="36" r="7.500" fill="none" stroke="#47a5f5" stroke-width="4"/><path d="M27 0l2 7 3-5 3 5 1-7" fill="none" stroke="#333" stroke-width="2"/></svg></div>
    <div class="app"><svg viewBox="0 0 64 64"><path d="M4 2h56l-7 60q0 6-21 6t-21-6z" fill="url(#gBin)"/><path d="M6 8l5-10 7 2 5-6 8 5 8-5 6 5 8-2 5 8q-2 6-26 6T6 8z" fill="#dcdcdc"/><path d="M14 6l5-7 6 7zM36 7l6-9 5 9z" fill="#8a8a8a"/><path d="M26 3l5 4-7 2z" fill="#37c6c0"/><path d="M44 4l6 3-7 2z" fill="#d2803f"/><ellipse cx="32" cy="3" rx="28" ry="9" fill="none" stroke="#a9adaf" stroke-width="1.200" opacity=".6"/></svg></div>
  </footer>
</div>
</body>
</html>
```

FILE: styles.css
```css
* { box-sizing: border-box; }
body { margin: 0; background: #3a3736; font-family: Inter, "Liberation Sans", sans-serif; }
svg { display: block; overflow: visible; }
i { display: block; }
.defs { position: absolute; }

.desktop { display: flex; flex-direction: column; align-items: center; width: 3024px; height: 1964px; overflow: hidden;
  background: linear-gradient(#3f3e3c 0, #3f3d3d 76px, #000 1800px, #050505 1850px, #363333 1952px, #3a3737 1964px); }

/* menu bar */
.menubar { display: flex; justify-content: space-between; width: 100%; height: 76px; padding: 0 35px 0 38px; background: linear-gradient(90deg, #3f3e3b, #413e3f 50%, #3f3c3a); color: #fff; }
.menus { display: grid; grid-template-columns: 69px 143px 83px 89px 99px 129px 176px 133px 83px 138px 60px; align-items: center; height: 73px; font-size: 26px; font-weight: 500; letter-spacing: -.4px; white-space: nowrap; }
.menus b { font-weight: 700; letter-spacing: -.2px; }
.apple { margin-top: -4px; }
.status { display: grid; grid-template-columns: 58px 66px 64px 69px 66px 84px 44px 114px 88px 76px 63px 249px; align-items: center; height: 74px; }
.temp { display: flex; flex-direction: column; align-items: center; width: 66px; font-size: 20px; line-height: 20px; font-weight: 500; letter-spacing: -.5px; padding-top: 3px; }
.ui { font-family: Inter, sans-serif; font-weight: 500; fill: #fff; }
.s24 { font-size: 24px; }
.s26 { font-size: 26px; }
.s27 { font-size: 27.500px; font-weight: 450; }
.dim { fill: #b4b4b4; }

/* browser window */
.window { position: relative; width: 3024px; height: 1772px; border-top: 2px solid #6c6b6b; border-radius: 22px; overflow: hidden; background: #000; }
.window::after { content: ""; position: absolute; inset: 0; border-radius: 20px; box-shadow: inset 0 0 0 2px rgba(255,255,255,.2); pointer-events: none; }
.tabstrip { display: grid; grid-template-columns: 158px 49px 359px 53px 463px 77px 359px 46px 24px 30px 1fr; align-items: center; height: 78px; padding-left: 42px; }
.tabstrip > :nth-child(6) { margin-left: 29px; }
.lights { display: flex; gap: 16px; }
.lights i { width: 24px; height: 24px; border-radius: 50%; }
.red { background: #ff5f57; }
.amber { background: #febc2e; }
.green { background: #28c840; }
.title { overflow: hidden; -webkit-mask-image: linear-gradient(90deg, #000 86%, transparent); mask-image: linear-gradient(90deg, #000 86%, transparent); }
.tab { position: relative; display: grid; grid-template-columns: 48px 359px 20px; align-items: center; align-self: end; height: 68px; padding: 0 0 10px 16px; border-radius: 20px 20px 0 0; background: #2d2d2d; }
.tab::before, .tab::after { content: ""; position: absolute; bottom: 0; width: 24px; height: 24px; }
.tab::before { right: 100%; background: radial-gradient(circle at 0 0, transparent 23.500px, #2d2d2d 24px); }
.tab::after { left: 100%; background: radial-gradient(circle at 100% 0, transparent 23.500px, #2d2d2d 24px); }
.bar { width: 4px; height: 32px; margin-left: -2px; border-radius: 2px; background: #333; }
.plus { margin-left: -2px; }
.more { display: flex; align-items: center; justify-content: center; justify-self: end; width: 56px; height: 56px; margin-right: 12px; border-radius: 20px; background: #2d2d2d; }

.toolbar { display: grid; grid-template-columns: 71px 73px 77px 65px 1954px 74px 82px 66px 40px 67px 64px 354px; align-items: center; height: 94px; padding: 0 0 0 26px; border-bottom: 2px solid #565656; border-radius: 16px 16px 0 0; background: #2d2d2d; }
.omnibox { display: flex; align-items: center; width: 1926px; height: 68px; padding: 0 30px 0 10px; border-radius: 34px; background: #3f3f3f; }
.site { display: flex; align-items: center; justify-content: center; width: 48px; height: 48px; margin-right: 17px; border-radius: 50%; background: #2c2c2c; }
.fav { margin-left: auto; }
.ext { position: relative; width: 48px; height: 48px; padding: 8px 0 0 5px; margin-left: -1px; }
.ext span { position: absolute; left: 17px; top: 23px; width: 33px; height: 28px; border-radius: 8px; background: #6a38c0; color: #fff; font-size: 18px; font-weight: 600; line-height: 28px; text-align: center; }
.puzzle { margin-left: -3px; margin-top: -4px; }
.rule { width: 4px; height: 32px; border-radius: 2px; background: #111; margin-left: -1px; }
.avatar { overflow: hidden; border-radius: 50%; }
.update { display: flex; align-items: center; gap: 16px; width: 354px; height: 68px; padding-left: 24px; border-radius: 34px; background: #000; }

/* reservation page */
.page { position: relative; height: 1598px; background: #9fcced; }
.page::after { content: ""; position: absolute; left: 0; right: 0; bottom: 0; height: 100px; background: linear-gradient(transparent, rgba(0,0,0,.11)); pointer-events: none; }
.summary { display: flex; height: 200px; padding-left: 552px; background: #007cc2; }
.logo { margin: 32px 0 0 65px; }
.sheet { width: 1920px; height: 1398px; margin: 0 auto; background: #f5f5f5; }
.intro { display: flex; flex-direction: column; gap: 40px; height: 350px; padding-top: 60px; background: #eee; }
.form { display: flex; flex-direction: column; width: 1280px; margin: 0 auto; padding-top: 80px; }
.field { display: flex; align-items: center; justify-content: space-between; height: 100px; margin-bottom: 40px; padding: 0 38px 0 31px; border: 2px solid #e0e0e0; border-radius: 4px; background: #fff; }
.must { margin-top: 4px; }
.legend { display: grid; grid-template-columns: 118px 542px 69px auto; height: 60px; margin-top: -20px; }
.req { margin: 13px 0 0 25px; }
.error { width: 40px; height: 40px; margin-top: 20px; border-radius: 4px; background: #f03e42; }
.consent { margin: 110px auto 0; }
.confirm { position: relative; z-index: 1; width: 600px; height: 100px; margin: 46px auto 0; border-radius: 5px; background: #007cc2; }
.cursor { position: absolute; left: 1243px; top: 1288px; filter: drop-shadow(0 2px 2px rgba(0,0,0,.35)); }

.cond { font-family: Roboto, sans-serif; font-stretch: 75%; font-weight: 300; letter-spacing: .075em; }
.label { font-size: 38px; font-weight: 400; fill: #68a9de; }
.value { font-size: 62.500px; fill: #fff; }
.lira { font-family: Roboto, "DejaVu Sans", sans-serif; font-weight: 300; font-size: 40px; fill: #fff; }
.heading { font-size: 69px; fill: #555; }
.lead { font-size: 41.500px; fill: #505050; }
.input, .note, .fine, .cta { font-family: Roboto, sans-serif; font-stretch: 75%; font-weight: 300; }
.input { font-size: 46.500px; fill: #a9a9a9; }
.note { font-size: 34px; fill: #505050; }
.fine { font-size: 35px; fill: #a9a9a9; }
.link { text-decoration: underline; }
.cta { font-size: 35px; font-weight: 450; fill: #fff; }
.mark { font-family: "Liberation Sans", sans-serif; font-weight: 700; fill: #151515; }

/* dock */
.dock { display: flex; gap: 20.960px; width: 2892px; height: 103px; margin-top: 4px; padding: 14px 0 0 14px; border: 2px solid #4d4c4c; border-radius: 34px; background: linear-gradient(#282828, #302e2e); box-shadow: 0 0 0 1px #151414; }
.app { position: relative; flex: none; width: 64px; height: 64px; }
.app svg { width: 64px; height: 64px; }
.run::after { content: ""; position: absolute; left: 28px; top: 74px; width: 8px; height: 8px; border-radius: 50%; background: #aaa; }
.badge { position: absolute; top: -9px; left: 54px; transform: translateX(-50%); min-width: 32px; height: 32px; padding: 0 5px; border-radius: 16px; background: #f23d31; color: #fff; font-size: 18.500px; letter-spacing: -.3px; line-height: 32px; text-align: center; box-shadow: 0 1px 3px rgba(0,0,0,.3); }
.wide { left: 43px; }
.short { left: 59px; }
.split { flex: none; width: 2px; height: 74px; margin-top: -2px; background: #5d5c5c; }
.one { margin-left: 9px; margin-right: 5px; }
.two { margin-left: 9px; margin-right: 7px; }
.ic { font-family: Inter, sans-serif; font-weight: 700; fill: #fff; text-anchor: middle; }
.left { text-anchor: start; }
.day { font-weight: 300; fill: #222; }
```
